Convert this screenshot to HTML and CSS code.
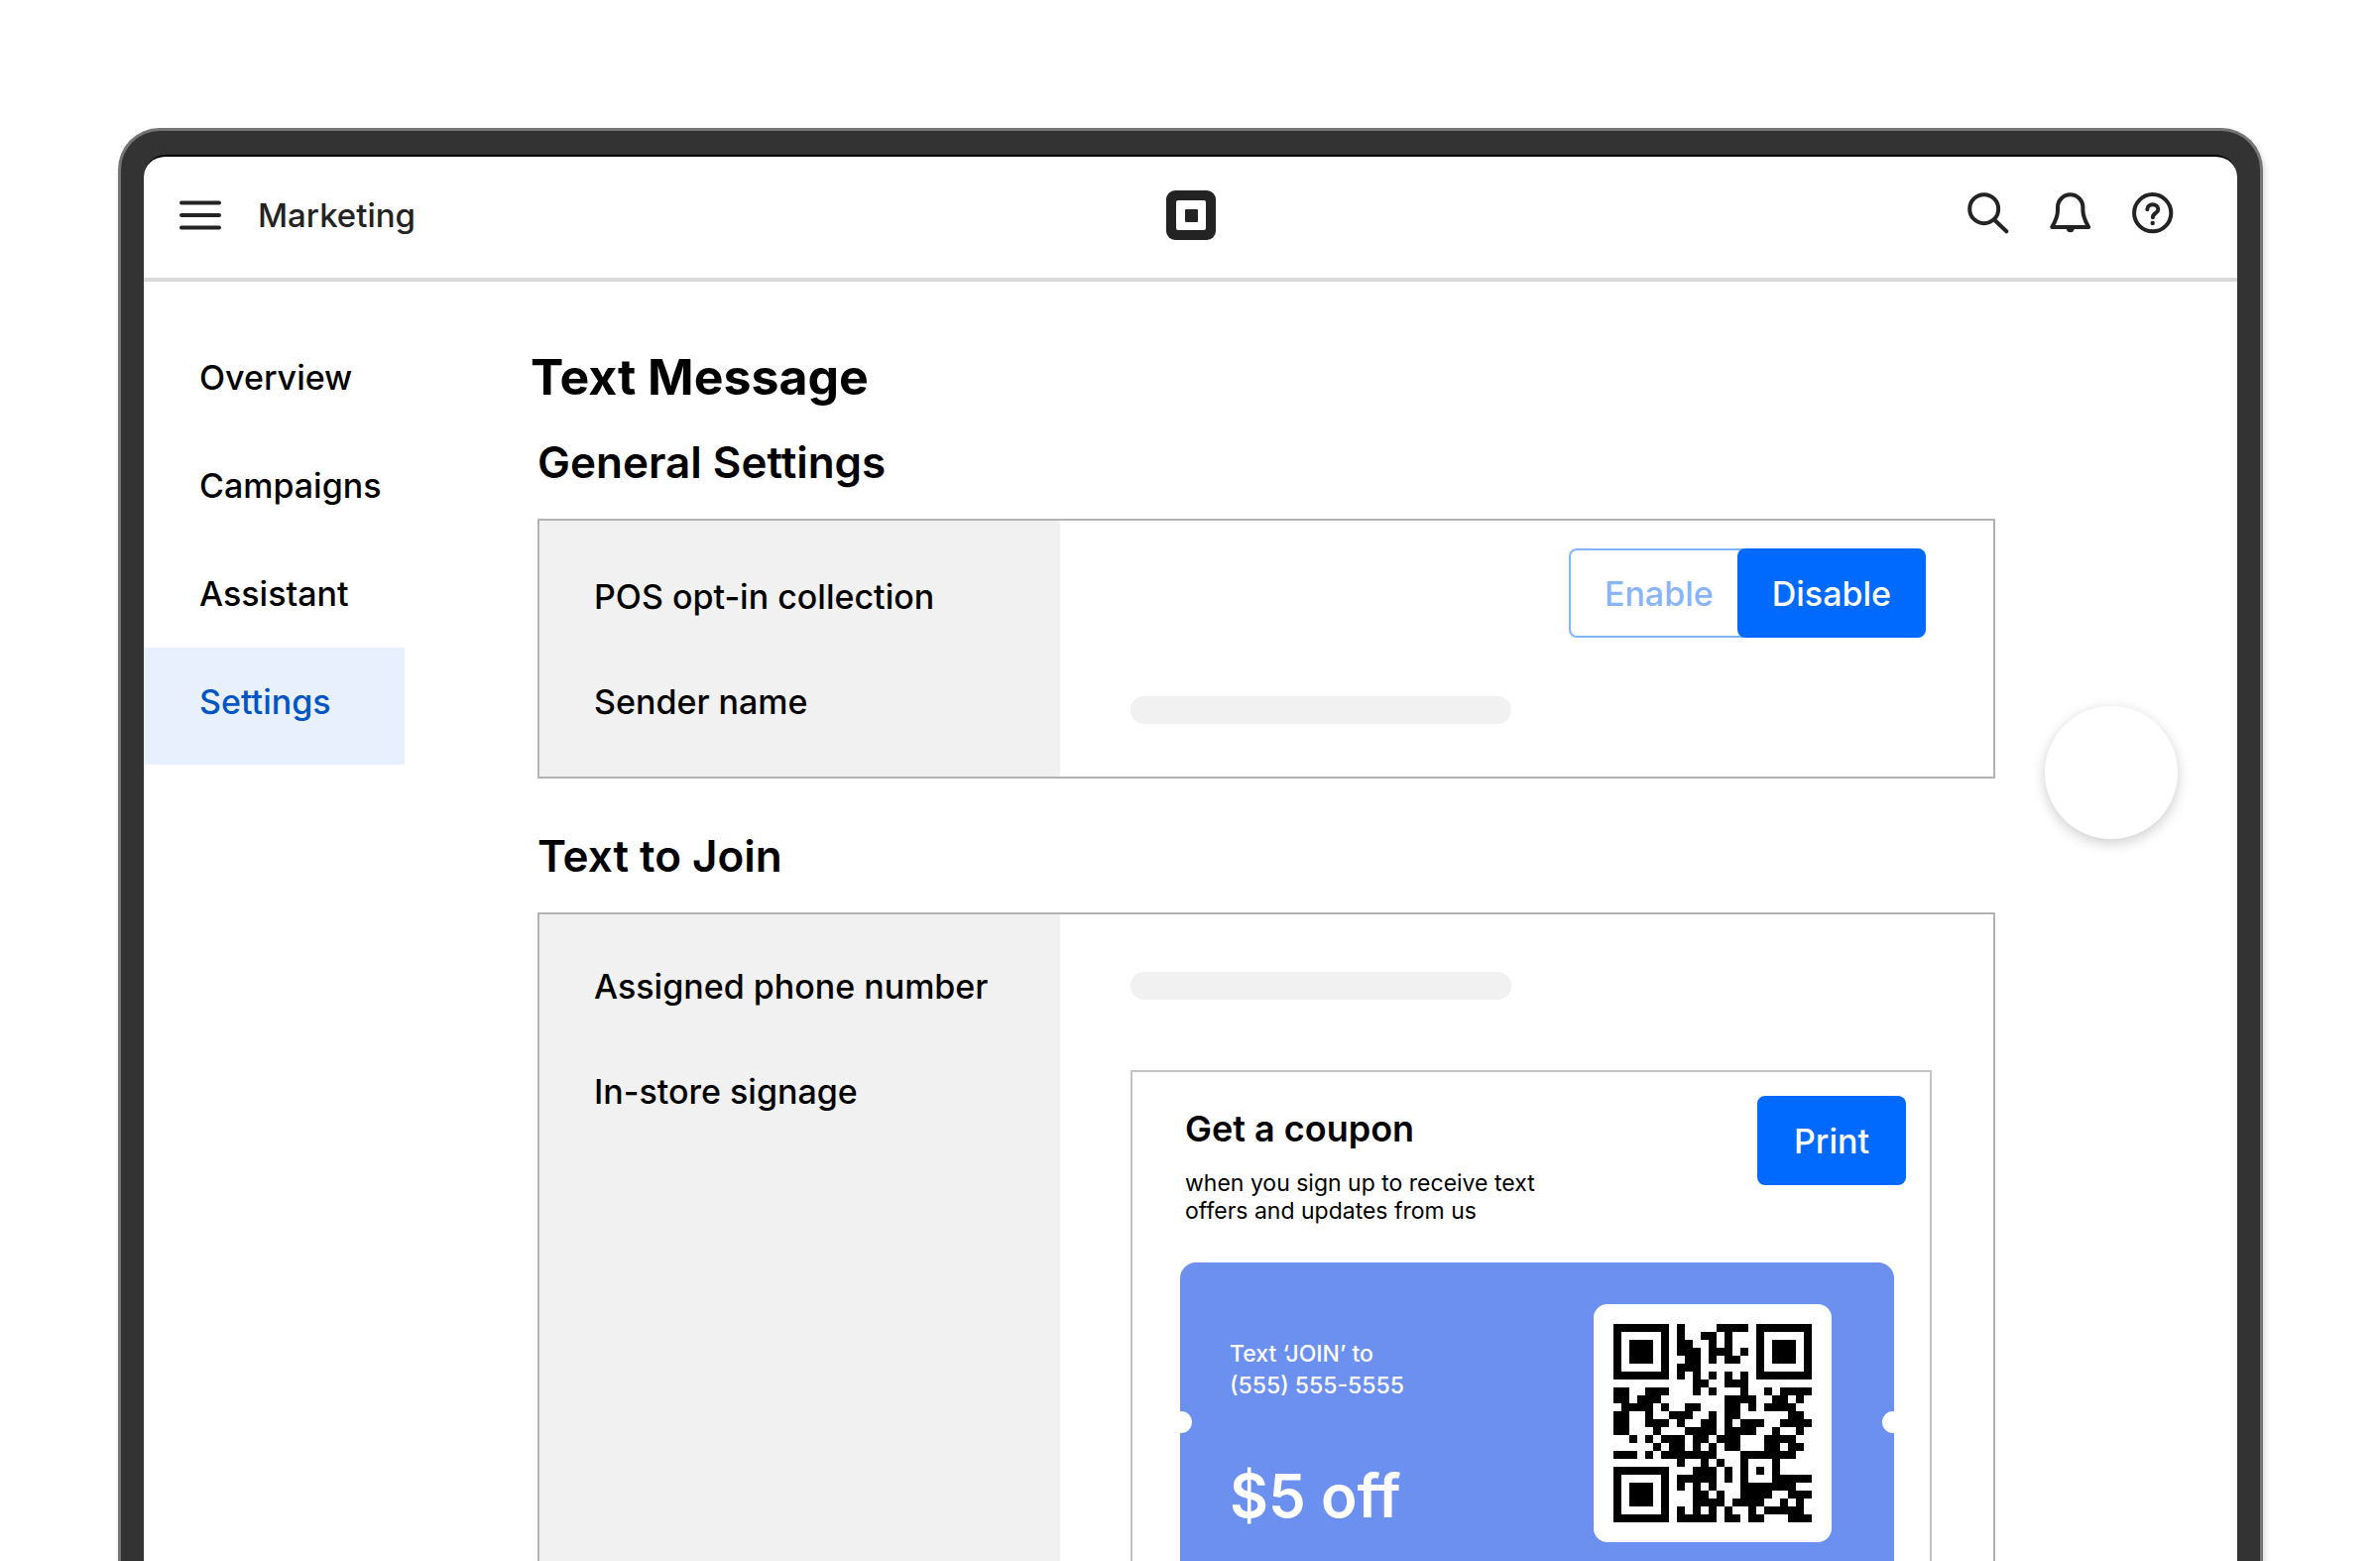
FILE: index.html
```
<!DOCTYPE html>
<html lang="en">
<head>
    <meta charset="UTF-8">
    <meta name="viewport" content="width=device-width, initial-scale=1.0">
    <title>Marketing - Text Message Settings</title>
    <link rel="stylesheet" href="styles.css">
</head>
<body>

    <div class="device">
        <div class="screen">

            <!-- top bar -->
            <header class="topbar">
                <div class="topbar-left">
                    <button class="icon-btn" aria-label="Menu">
                        <svg width="42" height="42" viewBox="0 0 42 42">
                            <path d="M2 8.500H40M2 21H40M2 33.500H40"/>
                        </svg>
                    </button>
                    <span class="app-name">Marketing</span>
                </div>
                <svg class="logo" width="50" height="50" viewBox="0 0 50 50">
                    <rect width="50" height="50" rx="9" fill="#232323"/>
                    <rect x="10" y="10" width="30" height="30" rx="2" fill="#fff"/>
                    <rect x="19" y="19" width="13" height="13" rx="1" fill="#232323"/>
                </svg>
                <div class="topbar-right">
                    <button class="icon-btn" aria-label="Search">
                        <svg width="42" height="42" viewBox="0 0 42 42">
                            <circle cx="16.700" cy="16.700" r="14.500"/>
                            <path d="M27.500 28L39.300 39.300"/>
                        </svg>
                    </button>
                    <button class="icon-btn" aria-label="Notifications">
                        <svg width="42" height="42" viewBox="0 0 42 42">
                            <path d="M2.200 35C5.500 29.500 8 25 8 18V15A12.700 12.700 0 0 1 33.400 15V18C33.400 25 36 29.500 39.200 35Z"/>
                            <path class="solid" d="M16.500 36H25A4.300 5 0 0 1 16.500 36Z"/>
                        </svg>
                    </button>
                    <button class="icon-btn" aria-label="Help">
                        <svg width="42" height="42" viewBox="0 0 42 42">
                            <circle cx="20.700" cy="20.700" r="18.600"/>
                            <path d="M15.300 17.300C15.300 10.500 26.300 10.500 26.300 17.300C26.300 21 20.900 21 20.900 25.200"/>
                            <circle class="solid" cx="20.700" cy="31" r="2.200"/>
                        </svg>
                    </button>
                </div>
            </header>

            <div class="content">
                <nav class="sidebar">
                    <a href="#">Overview</a>
                    <a href="#">Campaigns</a>
                    <a href="#">Assistant</a>
                    <a href="#" class="active">Settings</a>
                </nav>

                <main>
                    <h1>Text Message</h1>

                    <section>
                        <h2>General Settings</h2>
                        <div class="panel">
                            <div class="labels">
                                <p>POS opt-in collection</p>
                                <p>Sender name</p>
                            </div>
                            <div class="values">
                                <div class="toggle">
                                    <button class="btn btn-outline">Enable</button>
                                    <button class="btn btn-primary">Disable</button>
                                </div>
                                <div class="placeholder"></div>
                            </div>
                        </div>
                    </section>

                    <section class="join">
                        <h2>Text to Join</h2>
                        <div class="panel">
                            <div class="labels">
                                <p>Assigned phone number</p>
                                <p>In-store signage</p>
                            </div>
                            <div class="values">
                                <div class="placeholder"></div>

                                <div class="signage">
                                    <div class="signage-header">
                                        <div class="signage-text">
                                            <h3>Get a coupon</h3>
                                            <p>when you sign up to receive text<br>offers and updates from us</p>
                                        </div>
                                        <button class="btn btn-primary btn-print">Print</button>
                                    </div>

                                    <div class="coupon">
                                        <div class="coupon-text">
                                            <p>Text ‘JOIN’ to<br>(555) 555-5555</p>
                                            <strong>$5 off</strong>
                                        </div>
                                        <div class="qr">
                                            <!-- one line per row of modules -->
                                            <svg viewBox="0 -0.5 25 25" shape-rendering="crispEdges">
                                                <path d="
                                                    M0 0h7M8 0h1M13 0h4M18 0h7
                                                    M0 1h1M6 1h1M8 1h1M11 1h2M14 1h1M18 1h1M24 1h1
                                                    M0 2h1M2 2h3M6 2h1M8 2h2M12 2h1M14 2h1M18 2h1M20 2h3M24 2h1
                                                    M0 3h1M2 3h3M6 3h1M8 3h3M12 3h3M16 3h1M18 3h1M20 3h3M24 3h1
                                                    M0 4h1M2 4h3M6 4h1M9 4h2M12 4h1M14 4h2M18 4h1M20 4h3M24 4h1
                                                    M0 5h1M6 5h1M8 5h3M18 5h1M24 5h1
                                                    M0 6h7M8 6h1M10 6h1M12 6h1M14 6h1M16 6h1M18 6h7
                                                    M10 7h2M14 7h3
                                                    M0 8h2M4 8h3M10 8h1M12 8h1M16 8h1M19 8h1M21 8h4
                                                    M0 9h2M3 9h3M14 9h4M20 9h2M23 9h1
                                                    M1 10h4M6 10h1M9 10h2M14 10h2M17 10h1M19 10h4
                                                    M0 11h2M4 11h1M7 11h3M12 11h1M14 11h2M22 11h2
                                                    M0 12h2M4 12h3M8 12h1M11 12h2M14 12h1M16 12h3M21 12h4
                                                    M0 13h2M5 13h1M9 13h4M14 13h4M20 13h1M23 13h1
                                                    M2 14h1M4 14h1M6 14h3M10 14h2M13 14h3M19 14h4
                                                    M5 15h1M7 15h2M10 15h1M12 15h1M14 15h2M19 15h2M22 15h2
                                                    M0 16h3M4 16h1M6 16h7M16 16h7
                                                    M8 17h1M11 17h1M13 17h1M16 17h1M20 17h1
                                                    M0 18h7M10 18h3M14 18h1M16 18h1M18 18h1M20 18h1
                                                    M0 19h1M6 19h1M8 19h5M14 19h1M16 19h1M20 19h5
                                                    M0 20h1M2 20h3M6 20h1M8 20h1M10 20h1M12 20h1M16 20h7
                                                    M0 21h1M2 21h3M6 21h1M10 21h2M13 21h1M16 21h4M22 21h3
                                                    M0 22h1M2 22h3M6 22h1M10 22h4M15 22h4M21 22h1M23 22h1
                                                    M0 23h1M6 23h1M8 23h1M10 23h1M12 23h1M14 23h1M17 23h1M19 23h5
                                                    M0 24h7M8 24h5M14 24h2M17 24h2M22 24h3"/>
                                            </svg>
                                        </div>
                                    </div>
                                </div>
                            </div>
                        </div>
                    </section>
                </main>
            </div>

            <div class="touch-dot"></div>
        </div>
    </div>

</body>
</html>
```

FILE: styles.css
```
* {
    box-sizing: border-box;
}

body {
    margin: 0;
    padding: 129px 118px 0 119px;
    height: 100vh;
    display: flex;
    flex-direction: column;
    overflow: hidden;
    font-family: Inter, "Liberation Sans", sans-serif;
    font-weight: 500;
    color: #000;
    background: #fff;
}

h1, h2, h3, p {
    margin: 0;
}

/* device frame, runs off the bottom of the window */
.device {
    flex: 1;
    display: flex;
    flex-direction: column;
    padding: 24px 23px 0;
    border: 3px solid #757575;
    border-bottom: none;
    border-radius: 42px 42px 0 0;
    background: #333;
    box-shadow: 2px 4px 6px rgba(0, 0, 0, 0.15);
}

.screen {
    flex: 1;
    display: flex;
    flex-direction: column;
    position: relative;
    border-top: 2px solid #000;
    border-radius: 22px 22px 0 0;
    background: #fff;
}

/* top bar */
.topbar {
    display: grid;
    grid-template-columns: 1fr auto 1fr;
    align-items: center;
    height: 126px;
    padding-bottom: 5px;
    border-bottom: 4px solid #dadada;
}

.topbar-left {
    display: flex;
    align-items: center;
    gap: 37px;
    padding-left: 36px;
}

.topbar-right {
    display: flex;
    justify-content: flex-end;
    gap: 41px;
    padding-right: 64px;
    padding-bottom: 4px;
}

.app-name {
    font-size: 33px;
    line-height: 40px;
    color: #232323;
}

.icon-btn {
    display: flex;
    padding: 0;
    border: none;
    background: none;
    cursor: pointer;
}

.icon-btn svg {
    fill: none;
    stroke: #232323;
    stroke-width: 4;
    stroke-linecap: round;
    stroke-linejoin: round;
}

.icon-btn .solid {
    fill: #232323;
    stroke: none;
}

.logo {
    display: block;
}

.content {
    flex: 1;
    display: flex;
}

/* sidebar */
.sidebar {
    width: 263px;
    padding-top: 42px;
}

.sidebar a {
    display: block;
    padding-left: 56px;
    font-size: 34px;
    line-height: 109px;
    color: #000;
    text-decoration: none;
}

.sidebar .active {
    padding-bottom: 9px;
    color: #0055c4;
    background: #e8f0fd;
}

/* settings */
main {
    flex: 1;
    display: flex;
    flex-direction: column;
    padding: 66px 244px 0 127px;
}

h1 {
    font-size: 50px;
    line-height: 60px;
    font-weight: 700;
}

section {
    padding-left: 7px;
    margin-top: 31px;
}

h2 {
    margin-bottom: 32px;
    font-size: 44px;
    line-height: 50px;
    font-weight: 600;
}

.panel {
    display: flex;
    border: 2px solid #b3b3b3;
}

.labels {
    width: 525px;
    padding: 24px 0 22px 55px;
    font-size: 34px;
    line-height: 106px;
    background: #f1f1f1;
}

.values {
    flex: 1;
    padding: 28px 62px 0 71px;
}

.toggle {
    display: flex;
    justify-content: flex-end;
    margin-bottom: 59px;
    padding-right: 6px;
}

.placeholder {
    width: 384px;
    height: 28px;
    border-radius: 14px;
    background: #f1f1f1;
}

.btn {
    height: 90px;
    padding: 0 35px;
    border: none;
    border-radius: 8px;
    font-family: inherit;
    font-size: 34px;
    font-weight: 500;
    cursor: pointer;
}

.btn-primary {
    color: #fff;
    background: #006aff;
}

.btn-outline {
    margin-right: -12px;
    padding: 0 34px;
    border: 2px solid #80b4ff;
    color: #8ab4f8;
    background: #fff;
}

.btn-print {
    padding: 0 37px;
}

/* text to join */
.join {
    flex: 1;
    display: flex;
    flex-direction: column;
    margin-top: 53px;
}

.join .panel {
    flex: 1;
    border-bottom: none;
}

.join .labels {
    padding-top: 20px;
}

.join .values {
    display: flex;
    flex-direction: column;
    padding-top: 58px;
}

.signage {
    flex: 1;
    display: flex;
    flex-direction: column;
    margin-top: 71px;
    border: 2px solid #c4c4c4;
    border-bottom: none;
}

.signage-header {
    display: flex;
    justify-content: space-between;
    align-items: flex-start;
    padding: 24px 24px 0 53px;
}

.signage-text {
    padding-top: 11px;
}

h3 {
    margin-bottom: 19px;
    font-size: 36px;
    line-height: 44px;
    font-weight: 600;
}

.signage-text p {
    font-size: 23px;
    line-height: 28px;
    font-weight: 400;
}

.coupon {
    flex: 1;
    display: flex;
    justify-content: space-between;
    align-items: flex-start;
    position: relative;
    margin: 38px 36px 0 48px;
    padding: 42px 63px 0 50px;
    border-radius: 16px 16px 0 0;
    color: #fff;
    background: #6b90ef;
}

/* punched notches on both edges */
.coupon::before,
.coupon::after {
    content: "";
    position: absolute;
    top: 150px;
    width: 22px;
    height: 22px;
    border-radius: 50%;
    background: #fff;
}

.coupon::before {
    left: -10px;
}

.coupon::after {
    right: -10px;
}

.coupon-text {
    padding-top: 34px;
}

.coupon-text p {
    margin-bottom: 60px;
    font-size: 23px;
    line-height: 32px;
}

.coupon-text strong {
    display: block;
    font-size: 60px;
    line-height: 70px;
    font-weight: 600;
}

.qr {
    width: 240px;
    height: 240px;
    padding: 20px;
    border-radius: 14px;
    background: #fff;
}

.qr svg {
    display: block;
    stroke: #000;
    stroke-width: 1;
}

/* touch pointer floating over the page */
.touch-dot {
    position: absolute;
    top: 554px;
    right: 60px;
    width: 134px;
    height: 134px;
    border-radius: 50%;
    background: #fff;
    box-shadow: 0 4px 14px rgba(0, 0, 0, 0.2);
}
```
